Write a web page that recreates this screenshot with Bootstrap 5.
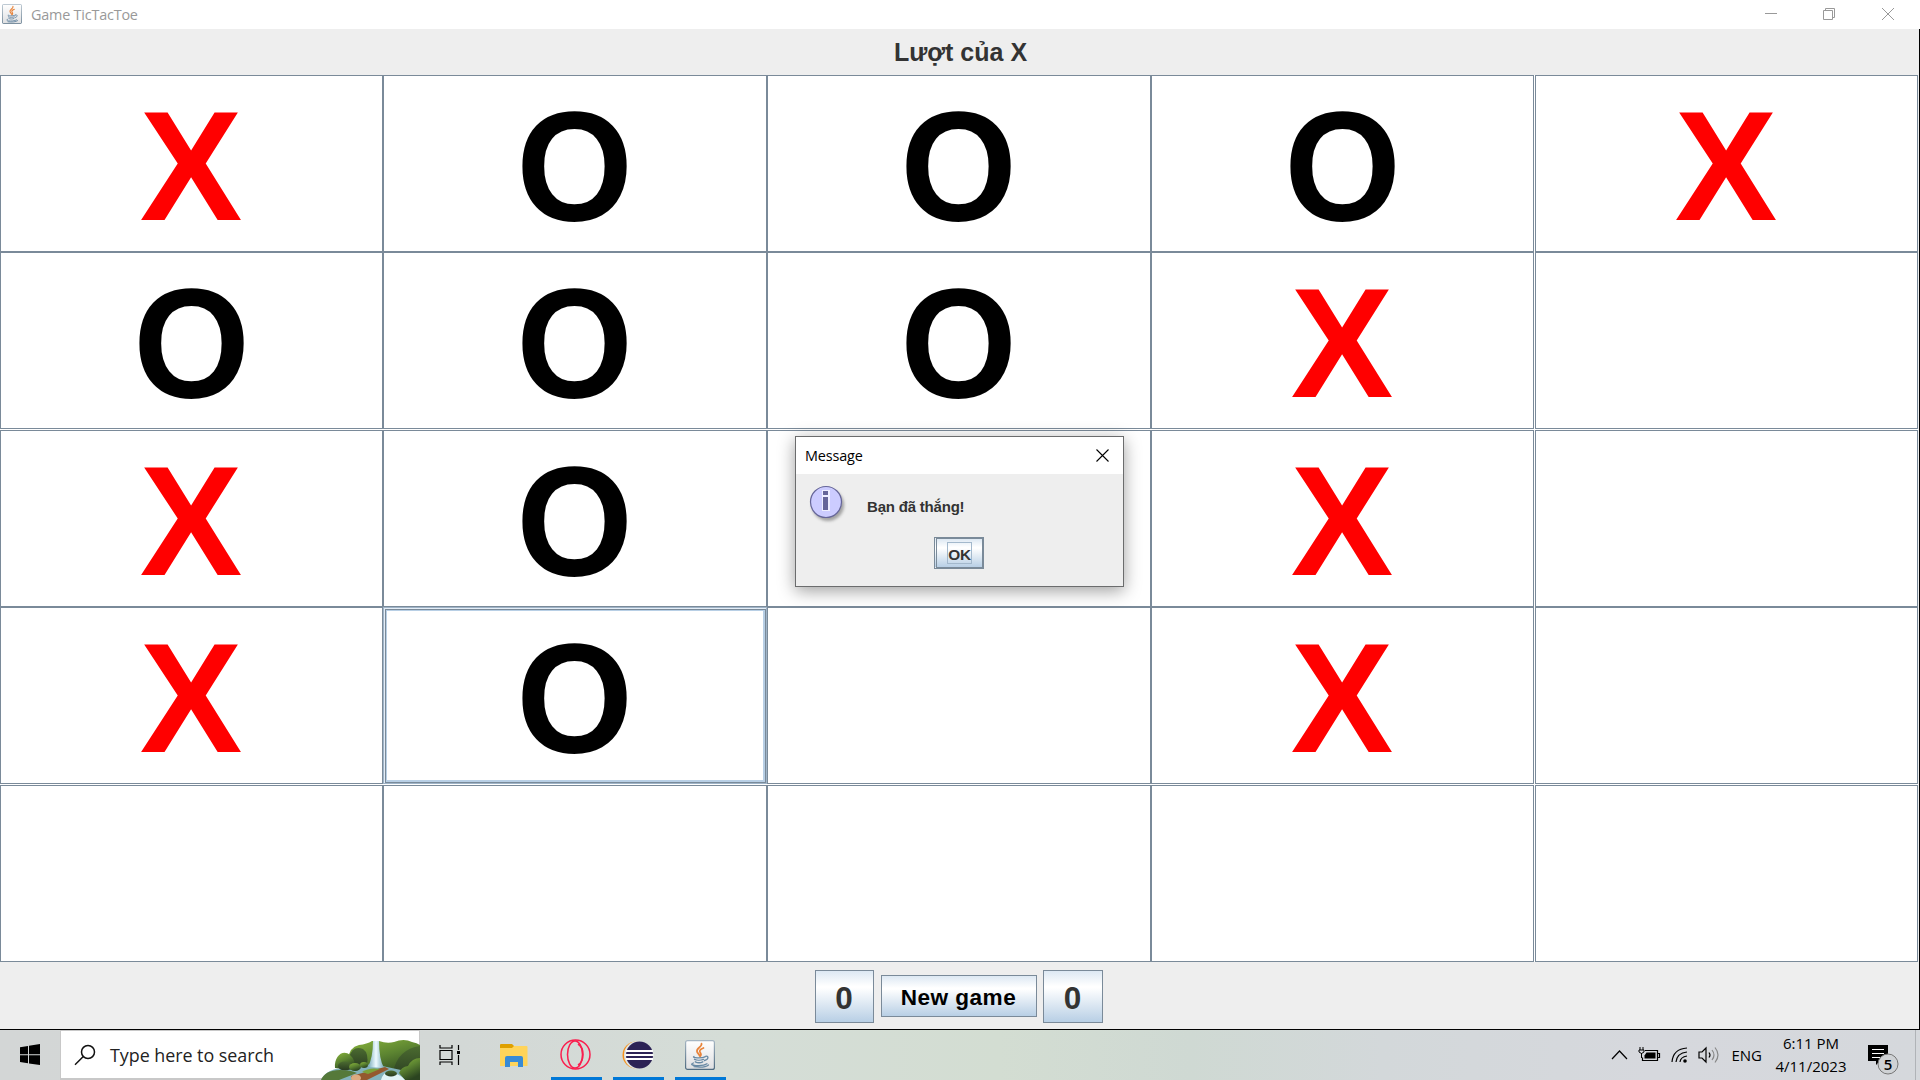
<!DOCTYPE html>
<html lang="vi">
<head>
<meta charset="utf-8">
<title>Game TicTacToe</title>
<link href="https://cdn.jsdelivr.net/npm/bootstrap@5.3.0/dist/css/bootstrap.min.css" rel="stylesheet">
<style>
  body { width: 1920px; height: 1080px; overflow: hidden; background: #eee; font-family: "Liberation Sans", Arial, sans-serif; color: #333; }
  .segoe { font-family: "Open Sans", "Noto Sans", sans-serif; }
  .titlebar { height: 29px; padding: 0 9px 1px 2px; color: #999; }
  .app-name { font-size: 14.4px; line-height: 28px; letter-spacing: -.2px; margin-left: 9px; padding-top: 1px; }
  .client { height: 1001px; border-right: 1px solid #000; border-bottom: 1px solid #000; }
  .turn { height: 46px; font-size: 25px; line-height: 46px; padding-left: 2px; }
  .board { display: grid; grid-template-columns: 383px 384px 384px 384px 383px; grid-template-rows: 177px 178px 177px 178px 177px; background: #fff; width: 1918px; }
  .tile { border: 1px solid #7a8a99; border-radius: 0; padding: 0; background: #fff; font-size: 156px; line-height: 181px; font-weight: 700; color: #000; height: 177px; overflow: hidden; }
  .tile span { display: inline-block; transform: scaleX(.962); }
  .tile.px { color: red; padding-right: 1px; }
  .tile.px span { transform: scaleX(.985); }
  .tile:nth-child(5n+4) { margin-right: 1px; }
  .tile.focus-tile { border-color: #9fb4c8; box-shadow: inset 1px 1px #e4edf6, inset -1px -1px #7a8a99, inset 2px 2px #7a8a99, inset -2px -2px #b8cfe5, inset 3px 3px #b8cfe5, inset -3px -3px #b8cfe5; }
  .metal { border: 1px solid #7a8a99; border-radius: 0; background: linear-gradient(#dde8f3 0, #fff 30%, #fff 33%, #b8cfe5 100%); font-weight: 700; padding: 0; }
  .foot { height: 67px; gap: 6px; padding: 1px 2px 0 0; }
  .score { width: 60px; height: 53px; font-size: 31.5px; color: #333; padding-top: 4px; }
  .score:first-child { width: 59px; margin-right: 1px; }
  .newgame { width: 156px; height: 42px; font-size: 22.6px; letter-spacing: .45px; color: #000; padding-top: 3px; }
  .dialog { position: absolute; left: 795px; top: 436px; width: 329px; height: 151px; border: 1px solid #6b6c6d; background: #eee; box-shadow: 0 4px 16px rgba(0,0,0,.38); }
  .dialog-head { height: 37px; background: #fff; color: #000; font-size: 14.4px; letter-spacing: -.15px; padding: 0 14px 0 9px; }
  .dialog-body { padding: 11px 0 0 13px; height: 63px; }
  .msg { font-size: 15px; font-weight: 700; letter-spacing: -.2px; margin: 12px 0 0 20px; line-height: 20px; }
  .ok { width: 50px; height: 32px; border: 2px solid #7a8a99; border-left: 3px double #7a8a99; font-size: 15.4px; color: #333; margin-left: 138px; }
  .ok span { border: 1px solid #a3b8cc; line-height: 20px; width: 25px; height: 22px; padding-top: 3px; letter-spacing: -.4px; }
  .taskbar { height: 50px; color: #000; background: linear-gradient(90deg, #d3d6d6 0, #d3d8d6 24%, #d5ddd7 38%, #d3ddd2 52%, #cfd9d3 62%, #d3d8da 72%, #d6d8dd 86%, #d5d8dc 100%); }
  .start { width: 60px; padding-left: 19px; }
  .search { width: 360px; height: 50px; background: #fff; border: 1px solid #c8c8c8; border-bottom-width: 2px; padding-left: 13px; font-size: 17.9px; color: #222; position: relative; }
  .search-label { margin-left: 14px; padding-top: 2px; letter-spacing: -.04px; }
  .search .falls { position: absolute; right: -1px; bottom: -2px; }
  .tasks { margin-left: 7px; }
  .task { width: 51px; height: 50px; margin-right: 11px; padding-right: 2px; }
  .task:first-child { padding-right: 5px; }
  .task.on { border-bottom: 3px solid #0078d7; padding-top: 2px; }
  .tray { font-size: 15px; }
  .lang { margin-left: 9px; }
  .clock { width: 90px; line-height: 23px; text-align: center; font-size: 15px; margin: 0 11px 0 4px; }
  .peek { width: 5px; margin-left: 14px; border-left: 1px solid #b0b3b7; }
</style>
<script src="https://cdn.jsdelivr.net/npm/bootstrap@5.3.0/dist/js/bootstrap.bundle.min.js"></script>
</head>
<body>
<svg width="0" height="0" class="position-absolute">
  <defs>
    <linearGradient id="jb" x2="0" y2="1"><stop stop-color="#fff"/><stop offset="1" stop-color="#dedfe1"/></linearGradient>
    <linearGradient id="jr" x2="0" y2="1"><stop stop-color="#a5b5c2"/><stop offset="1" stop-color="#4f6b80"/></linearGradient>
    <symbol id="java" viewBox="0 0 30 30">
      <rect x=".6" y=".6" width="28.8" height="28.8" rx="2" fill="url(#jb)" stroke="url(#jr)" stroke-width="1.2"/>
      <g fill="none" stroke="#e8833a" stroke-width="1.7" stroke-linecap="round"><path d="M16.5 3.5c1 3.5-5.500 4.500-4.500 8 .3 1.500 2 2.500 2.500 4M18.500 8c-4 1.500-4.500 3-3 5 1 1.500.5 2.500-.5 3.500"/></g>
      <g fill="none" stroke="#6788a3" stroke-width="1.300" stroke-linecap="round"><path d="M9 16.500c-3 1.500 8 1.800 11 .3M9.500 19.300c2 1 6.500 1 9 0M10.300 21.800c2 1 5.500 1 7.500 0M20 16.500c4-1.500 4 3-.5 4M8.500 23c-7 2.500 9 4 13.500.8M9 26.700c6 .8 12 .3 14.500-1.700"/></g>
    </symbol>
  </defs>
</svg>
<header class="titlebar bg-white d-flex align-items-center segoe">
  <svg width="20" height="20"><use href="#java"/></svg>
  <span class="app-name">Game TicTacToe</span>
  <svg class="ms-auto" width="147" height="28" fill="none" stroke="#999"><path d="M1 13.500h12M59.500 10.500h9v9h-9zM61.500 10v-1.500h9v9h-2M118 8l12 12M130 8l-12 12"/></svg>
</header>
<main class="client">
  <div class="turn text-center fw-bold">Lượt của X</div>
  <div class="board">
    <button class="tile px"><span>X</span></button><button class="tile"><span>O</span></button><button class="tile"><span>O</span></button><button class="tile"><span>O</span></button><button class="tile px"><span>X</span></button>
    <button class="tile"><span>O</span></button><button class="tile"><span>O</span></button><button class="tile"><span>O</span></button><button class="tile px"><span>X</span></button><button class="tile"></button>
    <button class="tile px"><span>X</span></button><button class="tile"><span>O</span></button><button class="tile"></button><button class="tile px"><span>X</span></button><button class="tile"></button>
    <button class="tile px"><span>X</span></button><button class="tile focus-tile"><span>O</span></button><button class="tile"></button><button class="tile px"><span>X</span></button><button class="tile"></button>
    <button class="tile"></button><button class="tile"></button><button class="tile"></button><button class="tile"></button><button class="tile"></button>
  </div>
  <div class="foot d-flex justify-content-center align-items-center">
    <button class="metal score">0</button>
    <button class="metal newgame">New game</button>
    <button class="metal score">0</button>
  </div>
</main>
<section class="dialog">
  <div class="dialog-head segoe d-flex align-items-center justify-content-between">
    <span>Message</span>
    <svg width="13" height="13" stroke="#000" stroke-width="1.100"><path d="M.5.5l12 12M12.500.5l-12 12"/></svg>
  </div>
  <div class="dialog-body d-flex align-items-start">
    <svg width="38" height="40" viewBox="0 0 38 40">
      <defs><filter id="sh" x="-30%" y="-30%" width="160%" height="160%"><feGaussianBlur stdDeviation="1.600"/></filter></defs>
      <circle cx="19" cy="20" r="16" fill="#888" opacity=".75" filter="url(#sh)"/>
      <circle cx="17" cy="17" r="15.500" fill="#ccf" stroke="#669" stroke-width="1.200"/>
      <path d="M13 5h8v21h-8z" fill="#eef"/><path d="M14 6h5v4h-5zM14 12h5v13h-5z" fill="#669"/>
    </svg>
    <span class="msg">Bạn đã thắng!</span>
  </div>
  <button class="metal ok d-flex align-items-center justify-content-center"><span class="d-flex align-items-center justify-content-center">OK</span></button>
</section>
<footer class="taskbar d-flex segoe">
  <div class="start d-flex align-items-center"><svg width="22" height="22"><path d="M1 3.200l8-1.200v8.200H1zM10 1.800L21 0v10.200H10zM1 11.200h8v8L1 18zM10 11.200h11V21l-11-1.600z"/></svg></div>
  <div class="search d-flex align-items-center">
    <svg width="22" height="22" fill="none" stroke="#111" stroke-width="1.500"><circle cx="14" cy="8" r="6.500"/><path d="M9.300 12.500L1 20.700"/></svg>
    <span class="search-label">Type here to search</span>
    <svg class="falls" width="99" height="40" viewBox="0 0 99 40">
      <defs>
        <linearGradient id="gr" x2=".5" y2="1"><stop stop-color="#8ab53c"/><stop offset=".5" stop-color="#5c8431"/><stop offset="1" stop-color="#2b4420"/></linearGradient>
        <linearGradient id="dk" x2="0" y2="1"><stop stop-color="#4b6b30"/><stop offset="1" stop-color="#283a20"/></linearGradient>
        <linearGradient id="wt" x2="1"><stop stop-color="#75a9b8"/><stop offset=".5" stop-color="#eefaff"/><stop offset="1" stop-color="#78adbb"/></linearGradient>
      </defs>
      <path d="M27 20Q28 7 38 5Q46 4 51 1h7q8 3 15 1 10-4 18 0 5 1 8 3v35H34z" fill="url(#gr)"/>
      <path d="M28 17Q32 5 42 9q6 4 4 16l-6 5H30z" fill="url(#dk)"/>
      <path d="M72 32Q77 9 99 6v34H76z" fill="url(#dk)"/>
      <path d="M0 40q6-12 24-12 14-2 28-4l28 6 8 10z" fill="#83b3bd"/>
      <path d="M14 28C13 16 22 9 29 15q6 5 5 15z" fill="url(#gr)"/>
      <ellipse cx="24" cy="26" rx="7" ry="4.500" fill="url(#dk)"/><ellipse cx="34" cy="27" rx="6" ry="4" fill="url(#gr)"/><ellipse cx="43" cy="25" rx="4" ry="3" fill="url(#gr)"/>
      <path d="M52 1h6q0 18 5 27l-16-1q5-10 5-26z" fill="url(#wt)"/>
      <path d="M0 40q4-10 19-10 11 0 17 3L18 40z" fill="#55793a"/>
      <path d="M30 36L64 27l4 2-22 11H31z" fill="#94592f"/><ellipse cx="35" cy="38" rx="5" ry="3.500" fill="#dcaa80"/>
      <path d="M41 32q7-5 18-3l-12 5z" fill="#7ca33a"/>
      <path d="M78 33q2-6 9-7 4-8 12-8v22H84z" fill="url(#gr)"/>
      <path d="M60 40q3-10 10-7 8 0 14 7z" fill="#e1f4f7"/><ellipse cx="70" cy="33.500" rx="6" ry="3" fill="url(#dk)"/>
    </svg>
  </div>
  <div class="tasks d-flex">
    <div class="task d-flex align-items-center justify-content-center"><svg width="22" height="20" fill="none" stroke="#000" stroke-width="1.200"><path d="M1 0v3h12V0M1 5.500h12v9H1zM1 20v-3h12v3M19.500 0v5M19.500 10v10"/><path d="M18 6h3v3h-3z" fill="#000" stroke="none"/></svg></div>
    <div class="task d-flex align-items-center justify-content-center"><svg width="28" height="24"><path d="M0 1.500Q0 1 1 1h11l2 2v6H0z" fill="#dfa000"/><path d="M0 5h12l2-2h12.500q1 0 1 1v19H0z" fill="#ffd45a"/><path d="M5 24V15q0-2 2-2h14q2 0 2 2v9h-5v-5h-8v5z" fill="#398bd5"/></svg></div>
    <div class="task on d-flex align-items-center justify-content-center"><svg width="31" height="31" fill="none" stroke="#fa1e4e" stroke-width="1.500"><circle cx="15.500" cy="15.500" r="14.500"/><ellipse cx="15" cy="15.500" rx="7.500" ry="13.500"/><path d="M18 5q5 3 5 10.500T18 26"/></svg></div>
    <div class="task on d-flex align-items-center justify-content-center"><svg width="32" height="28"><circle cx="14" cy="14" r="13.500" fill="#f7941e"/><circle cx="16" cy="14" r="14" fill="#dfe4e4"/><circle cx="17.500" cy="14" r="13.500" fill="#2c2255"/><path d="M4 10h27M3.500 14h28M4 18h27" stroke="#fff" stroke-width="1.800"/></svg></div>
    <div class="task on d-flex align-items-center justify-content-center"><svg width="30" height="30"><use href="#java"/></svg></div>
  </div>
  <div class="tray d-flex align-items-center ms-auto">
    <svg width="112" height="22" viewBox="0 0 112 22" fill="none" stroke="#000" stroke-width="1.200">
      <path d="M2 15l7.500-8 7.500 8"/>
      <path d="M35 6.500h12.500v10h-15v-3M47.500 9.500h2v4h-2"/><path d="M36.500 8.500h9v6H34.500v-3z" fill="#000" stroke="none"/><path d="M30 3v3M33 3v3M29 6h5v2q-2.500 3-5 0zM31.500 9v5" stroke-width="1"/>
      <path d="M62 18Q63 5 77 4M66 18q1-9 11-10M70 18q.5-5 7-6"/><circle cx="75" cy="17" r="1.800" fill="#000" stroke="none"/>
      <path d="M89 8h3l4-4v14l-4-4h-3zM99 8.500q2 2.500 0 5"/><path d="M102 6q4 5 0 10M105 3.500q6 7.500 0 15" stroke="#888"/>
    </svg>
    <span class="lang">ENG</span>
    <div class="clock">6:11 PM<br>4/11/2023</div>
    <svg width="34" height="50"><path d="M1 15h20v16h-8l-4 4v-4H1z" fill="#000"/><path d="M5 19.500h12M5 23.500h12M5 27.500h8" stroke="#fff"/><circle cx="21" cy="34" r="10" fill="#cfd2d5" stroke="#777"/><text x="21" y="39.500" text-anchor="middle" font-size="15" font-weight="600">5</text></svg>
    <div class="peek h-100"></div>
  </div>
</footer>
</body>
</html>
